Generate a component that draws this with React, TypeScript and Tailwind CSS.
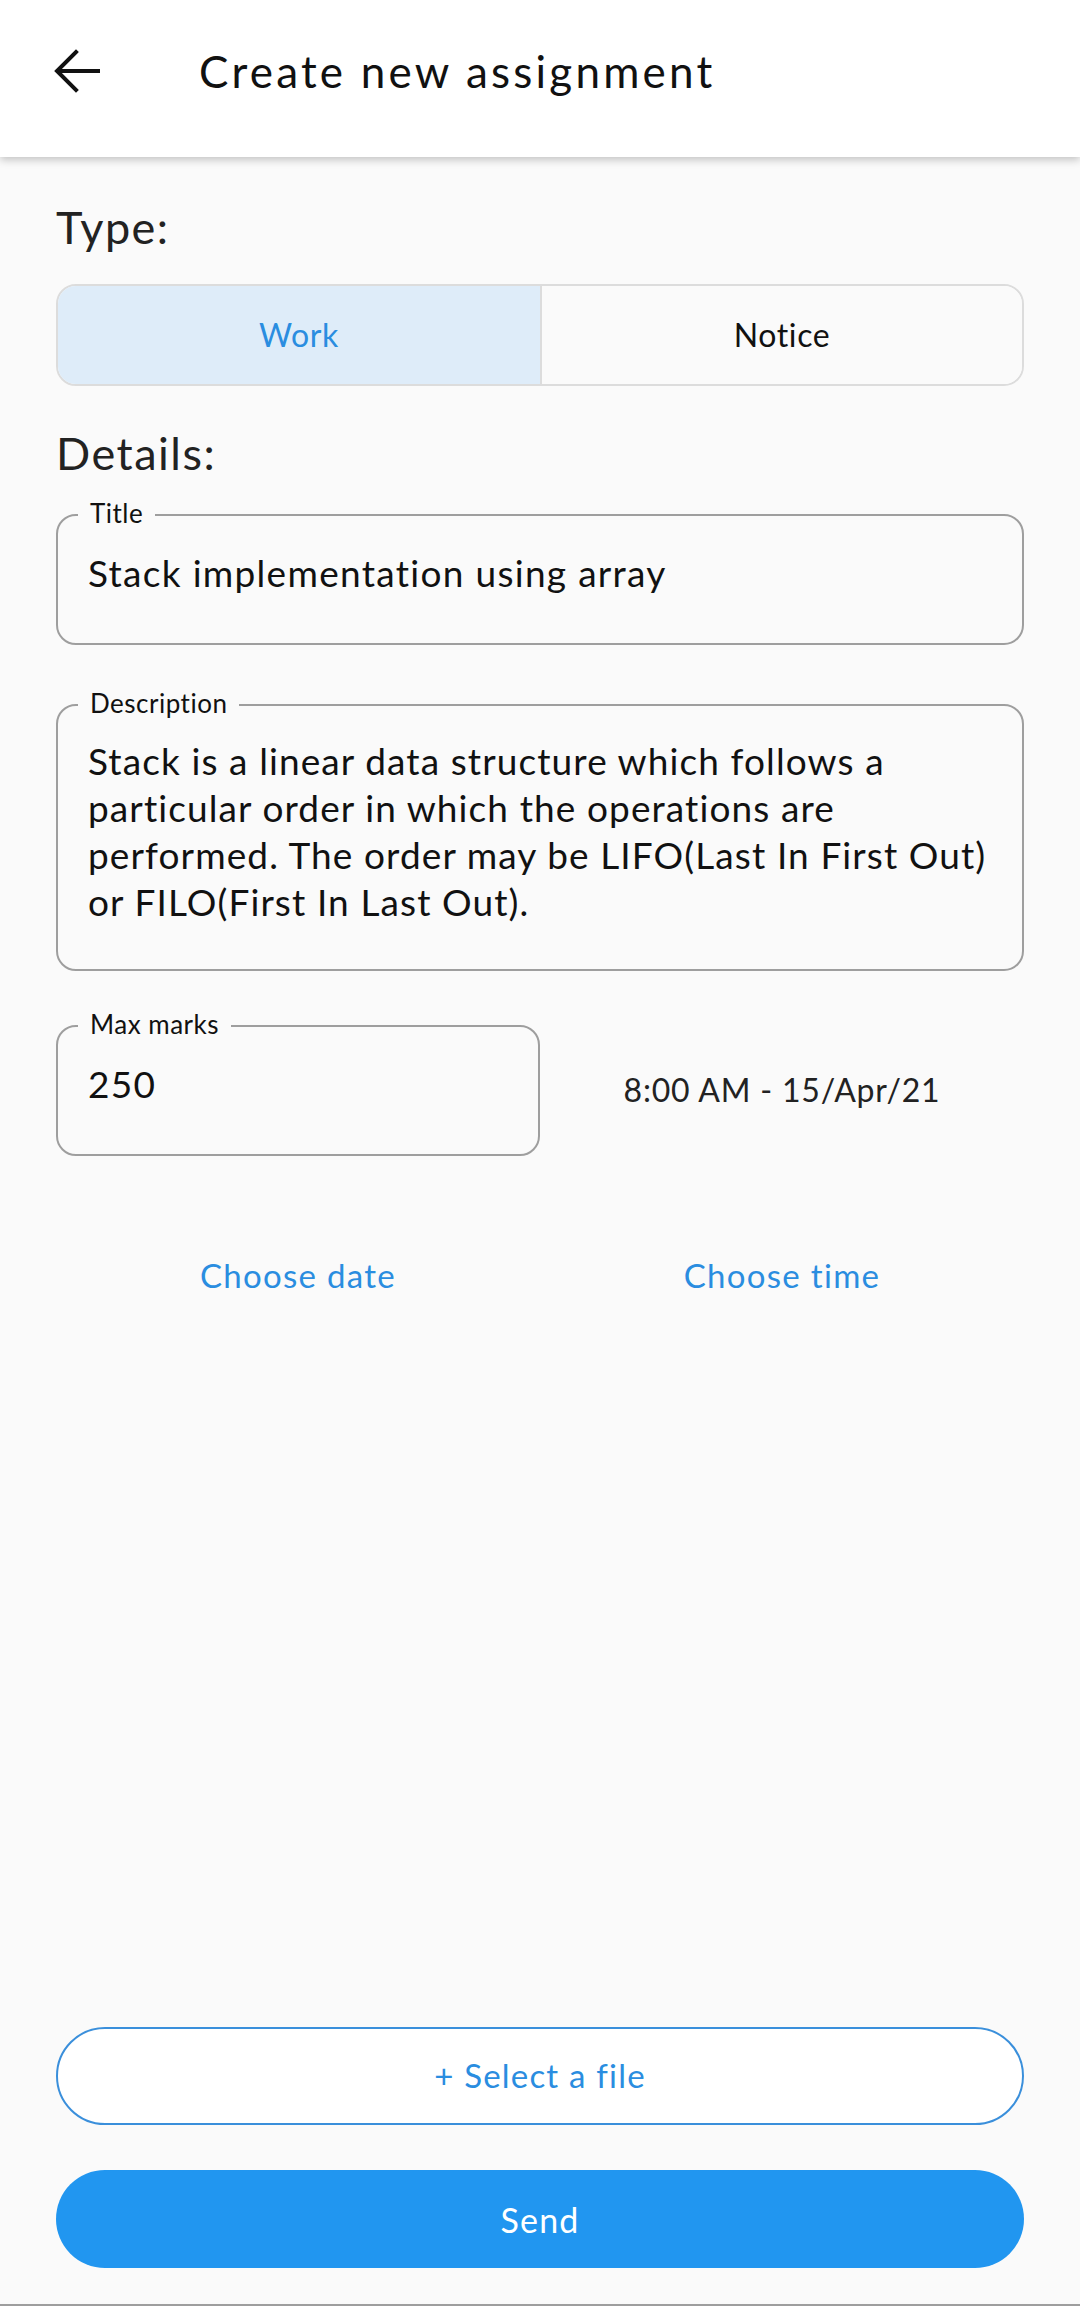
import React from "react";

const font = { fontFamily: "Lato, 'Noto Sans', sans-serif" };

/////////////////// outlined field with a label sitting on the border ///////////////////
const Field = ({
  label,
  children,
  className = "",
}: {
  label: string;
  children: React.ReactNode;
  className?: string;
}) => {
  return (
    <div className={`relative rounded-[20px] border-2 border-[#9e9e9e] ${className}`}>
      <span className="absolute left-[20px] top-[-19px] bg-[#fafafa] px-[12px] text-[26px] leading-[32px] tracking-[0.5px] text-[#111]">
        {label}
      </span>
      {children}
    </div>
  );
};

const BackArrow = () => (
  <svg width="46" height="44" viewBox="0 0 46 44" fill="none" stroke="#111" strokeWidth="4" strokeLinecap="square">
    <path d="M44 22H4" />
    <path d="M22 3L3 22l19 19" />
  </svg>
);

export default function App() {
  return (
    <div style={font} className="flex h-[2306px] w-full flex-col bg-[#fafafa] text-[#111]">
      {/* Header */}
      <div className="relative z-10 h-[157px] bg-white shadow-[0_3px_8px_rgba(0,0,0,0.22)]">
        <div className="flex h-[142px] items-center pl-[54px]">
          <BackArrow />
          <h1 className="ml-[99px] text-[44px] font-normal tracking-[3.2px]">Create new assignment</h1>
        </div>
      </div>

      {/* Body */}
      <div className="flex flex-1 flex-col px-[56px]">
        <div className="mt-[43px] text-[45px] leading-[54px] tracking-[1.5px] text-[#222]">Type:</div>

        <div className="mt-[30px] grid h-[102px] grid-cols-2 overflow-hidden rounded-[20px] border-2 border-[#dcdcdc]">
          <div className="flex items-center justify-center bg-[#deecf9] text-[32px] tracking-[0.6px] text-[#2a8de0]">Work</div>
          <div className="flex items-center justify-center border-l-2 border-[#dcdcdc] bg-[#fafafa] text-[32px] tracking-[0.6px] text-[#111]">
            Notice
          </div>
        </div>

        <div className="mt-[40px] text-[45px] leading-[54px] tracking-[1.5px] text-[#222]">Details:</div>

        <Field label="Title" className="mt-[34px] h-[131px] pl-[30px] pt-[33px]">
          <div className="text-[37px] leading-[47px] tracking-[1.3px]">Stack implementation using array</div>
        </Field>

        <Field label="Description" className="mt-[59px] h-[267px] pl-[30px] pr-[24px] pt-[31px]">
          <p className="text-[37px] leading-[47px] tracking-[1.1px]">
            Stack is a linear data structure which follows a particular order in which the operations are
            performed. The order may be LIFO(Last In First Out) or FILO(First In Last Out).
          </p>
        </Field>

        <div className="mt-[54px] grid grid-cols-2">
          <Field label="Max marks" className="h-[131px] pl-[30px] pt-[33px]">
            <div className="text-[37px] leading-[47px] tracking-[1.3px]">250</div>
          </Field>
          <div className="flex items-center justify-center pb-[2px] text-[32px] tracking-[0.8px] text-[#222]">
            8:00 AM - 15/Apr/21
          </div>
        </div>

        <div className="mt-[95px] grid grid-cols-2 text-[33px] tracking-[1.3px] text-[#2a8de0]">
          <div className="text-center">Choose date</div>
          <div className="text-center">Choose time</div>
        </div>

        <div className="flex-1" />

        <button className="h-[98px] w-full rounded-full border-2 border-[#3a8fdb] bg-white text-[33px] tracking-[1.2px] text-[#2a8de0]">
          + Select a file
        </button>
        <button className="mb-[36px] mt-[45px] h-[98px] w-full rounded-full bg-[#2196f0] text-[34px] tracking-[1.2px] text-white">
          Send
        </button>
      </div>
      <div className="h-[2px] bg-[#9e9e9e]" />
    </div>
  );
}
